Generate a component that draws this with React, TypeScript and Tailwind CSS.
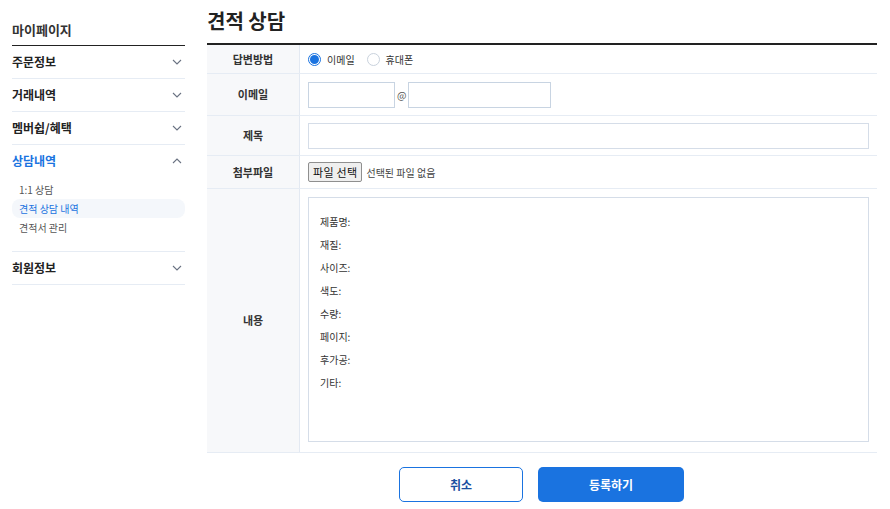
import React from "react";

const font = { fontFamily: '"Noto Sans CJK KR", "Noto Sans", sans-serif' };

function Chevron({ up = false }: { up?: boolean }) {
  return (
    <svg width="10" height="6" viewBox="0 0 10 6" className="text-gray-500">
      {up ? (
        <path d="M1 5 L5 1 L9 5" fill="none" stroke="currentColor" strokeWidth="1.1" />
      ) : (
        <path d="M1 1 L5 5 L9 1" fill="none" stroke="currentColor" strokeWidth="1.1" />
      )}
    </svg>
  );
}

function MenuRow({ label, active = false, up = false }: { label: string; active?: boolean; up?: boolean }) {
  return (
    <div className="flex h-[32px] items-center justify-between pr-[3px]">
      <span className={`text-[12px] font-bold ${active ? "text-[#1a73e0]" : "text-[#222]"}`}>{label}</span>
      <Chevron up={up} />
    </div>
  );
}

function Row({ label, children, className = "" }: { label: string; children?: React.ReactNode; className?: string }) {
  return (
    <div className={`flex border-b border-[#e6ecf4] ${className}`}>
      <div className="flex w-[93px] shrink-0 items-center justify-center border-r border-[#e3e9f2] bg-[#f7f8fa] text-[11px] font-bold text-[#333]">
        {label}
      </div>
      <div className="flex flex-1 items-center px-[8px]">{children}</div>
    </div>
  );
}

export default function App() {
  const fields = ["제품명:", "재질:", "사이즈:", "색도:", "수량:", "페이지:", "후가공:", "기타:"];
  return (
    <div className="flex h-[509px] w-[890px] bg-white" style={font}>
      {/* Sidebar */}
      <aside className="w-[185px] shrink-0 pl-[12px] pt-[20px]">
        <div className="border-b-[1.5px] border-[#222] pb-[5px] text-[13px] font-bold text-[#333]">마이페이지</div>
        <div className="border-b border-[#e6ecf4]"><MenuRow label="주문정보" /></div>
        <div className="border-b border-[#e6ecf4]"><MenuRow label="거래내역" /></div>
        <div className="border-b border-[#e6ecf4]"><MenuRow label="멤버쉽/혜택" /></div>
        <div className="border-b border-[#e6ecf4] pb-[14px]">
          <MenuRow label="상담내역" active up />
          <div className="mt-[3px] flex flex-col text-[10px]">
            <div className="flex h-[19px] items-center px-[7px] text-[#555]">1:1 상담</div>
            <div className="flex h-[19px] items-center rounded-[8px] bg-[#f4f7fb] px-[7px] text-[#1a73e0]">견적 상담 내역</div>
            <div className="flex h-[19px] items-center px-[7px] text-[#555]">견적서 관리</div>
          </div>
        </div>
        <div className="border-b border-[#e6ecf4]"><MenuRow label="회원정보" /></div>
      </aside>

      {/* Main */}
      <main className="ml-[22px] w-[670px] pt-[6px]">
        <h1 className="h-[37px] text-[20px] font-bold leading-[30px] text-[#222]">견적 상담</h1>
        <div className="border-t-2 border-[#222]">
          <Row label="답변방법" className="h-[29px]">
            <label className="flex items-center gap-[6px] text-[10px] text-[#333]">
              <span className="flex h-[13px] w-[13px] items-center justify-center rounded-full border border-[#1a73e0]">
                <span className="h-[9px] w-[9px] rounded-full bg-[#1a73e0]" />
              </span>
              이메일
            </label>
            <label className="ml-[12px] flex items-center gap-[6px] text-[10px] text-[#333]">
              <span className="h-[13px] w-[13px] rounded-full border border-[#c9d2dd]" />
              휴대폰
            </label>
          </Row>
          <Row label="이메일" className="h-[42px]">
            <div className="h-[26px] w-[87px] border border-[#c8d4e2]" />
            <span className="mx-[2px] text-[10px] text-[#555]">@</span>
            <div className="h-[26px] w-[143px] border border-[#c8d4e2]" />
          </Row>
          <Row label="제목" className="h-[40px]">
            <div className="h-[26px] flex-1 border border-[#d5dde8]" />
          </Row>
          <Row label="첨부파일" className="h-[33px] border-[#d5e0ec]">
            <span className="rounded-[2px] border border-[#8f8f8f] bg-[#efefef] px-[4px] py-[1px] text-[11px] tracking-[0.3px] text-[#111]">파일 선택</span>
            <span className="ml-[4px] text-[10px] text-[#444]">선택된 파일 없음</span>
          </Row>
          <Row label="내용" className="h-[264px]">
            <div className="mb-[3px] h-[245px] flex-1 border border-[#d5dde8] px-[11px] pt-[12px]">
              {fields.map((f) => (
                <div key={f} className="h-[23px] text-[10px] leading-[23px] text-[#333]">{f}</div>
              ))}
            </div>
          </Row>
        </div>
        <div className="mt-[14px] flex justify-center gap-[15px] pr-[1px]">
          <button className="h-[35px] w-[124px] rounded-[5px] border border-[#1a73e0] bg-white text-[12px] font-bold text-[#1a4fa0]">취소</button>
          <button className="h-[35px] w-[146px] rounded-[5px] bg-[#1a73e0] text-[12px] font-bold text-white">등록하기</button>
        </div>
      </main>
    </div>
  );
}
